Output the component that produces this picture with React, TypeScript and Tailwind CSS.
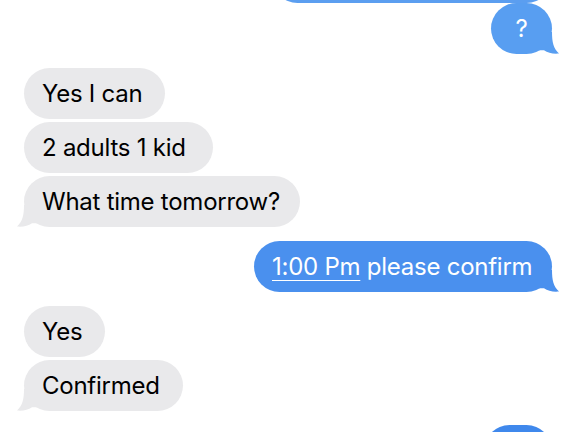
import React from "react";

type Msg = {
  id: number;
  me: boolean;
  text: React.ReactNode;
  w: number;
  tail: boolean;
  bg?: string;
  mt: string;
};

function Tail({ side, color }: { side: "left" | "right"; color: string }) {
  return (
    <svg
      width="20"
      height="22"
      viewBox="0 0 20 22"
      className={
        side === "right"
          ? "absolute bottom-0 right-[-7px]"
          : "absolute bottom-0 left-[-7px] -scale-x-100"
      }
    >
      <path
        d="M0 0 H13 C13 10 14.5 16.5 20 21.6 C14 22.2 9 21 5 18.3 L0 18.3 Z"
        fill={color}
      />
    </svg>
  );
}

const msgs: Msg[] = [
  { id: 0, me: true, text: "", w: 280, tail: false, bg: "#5b9ef0", mt: "mt-[-48px]" },
  { id: 1, me: true, text: "?", w: 61, tail: true, bg: "#589ef1", mt: "mt-[0px]" },
  { id: 2, me: false, text: "Yes I can", w: 141, tail: false, mt: "mt-[14px]" },
  { id: 3, me: false, text: "2 adults 1 kid", w: 189, tail: false, mt: "mt-[3px]" },
  { id: 4, me: false, text: "What time tomorrow?", w: 276, tail: true, mt: "mt-[3px]" },
  {
    id: 5,
    me: true,
    text: (
      <>
        <span className="underline decoration-1 underline-offset-[5px]">1:00 Pm</span> please confirm
      </>
    ),
    w: 298,
    tail: true,
    bg: "#4a90ee",
    mt: "mt-[14px]",
  },
  { id: 6, me: false, text: "Yes", w: 81, tail: false, mt: "mt-[14px]" },
  { id: 7, me: false, text: "Confirmed", w: 159, tail: true, mt: "mt-[3px]" },
  { id: 8, me: true, text: "", w: 68, tail: false, bg: "#3f88ec", mt: "mt-[14px]" },
];

export default function App() {
  return (
    <div className="h-[432px] w-[576px] overflow-hidden bg-white">
      <div
        className="flex flex-col px-[24px] text-[24px] tracking-[-0.25px]"
        style={{ fontFamily: "Inter, 'Liberation Sans', sans-serif" }}
      >
        {msgs.map((m) => (
          <div
            key={m.id}
            className={`flex ${m.me ? "justify-end" : "justify-start"} ${m.mt}`}
          >
            <div
              className={`relative flex h-[51px] shrink-0 items-center rounded-full ${
                m.me ? "text-white" : "bg-[#e9e9eb] text-black"
              } ${m.text === "?" ? "justify-center" : "pl-[18px]"}`}
              style={{ width: m.w, backgroundColor: m.me ? m.bg : undefined }}
            >
              <span className="whitespace-nowrap leading-none">{m.text}</span>
              {m.tail && (
                <Tail side={m.me ? "right" : "left"} color={m.me ? m.bg! : "#e9e9eb"} />
              )}
            </div>
          </div>
        ))}
      </div>
    </div>
  );
}
